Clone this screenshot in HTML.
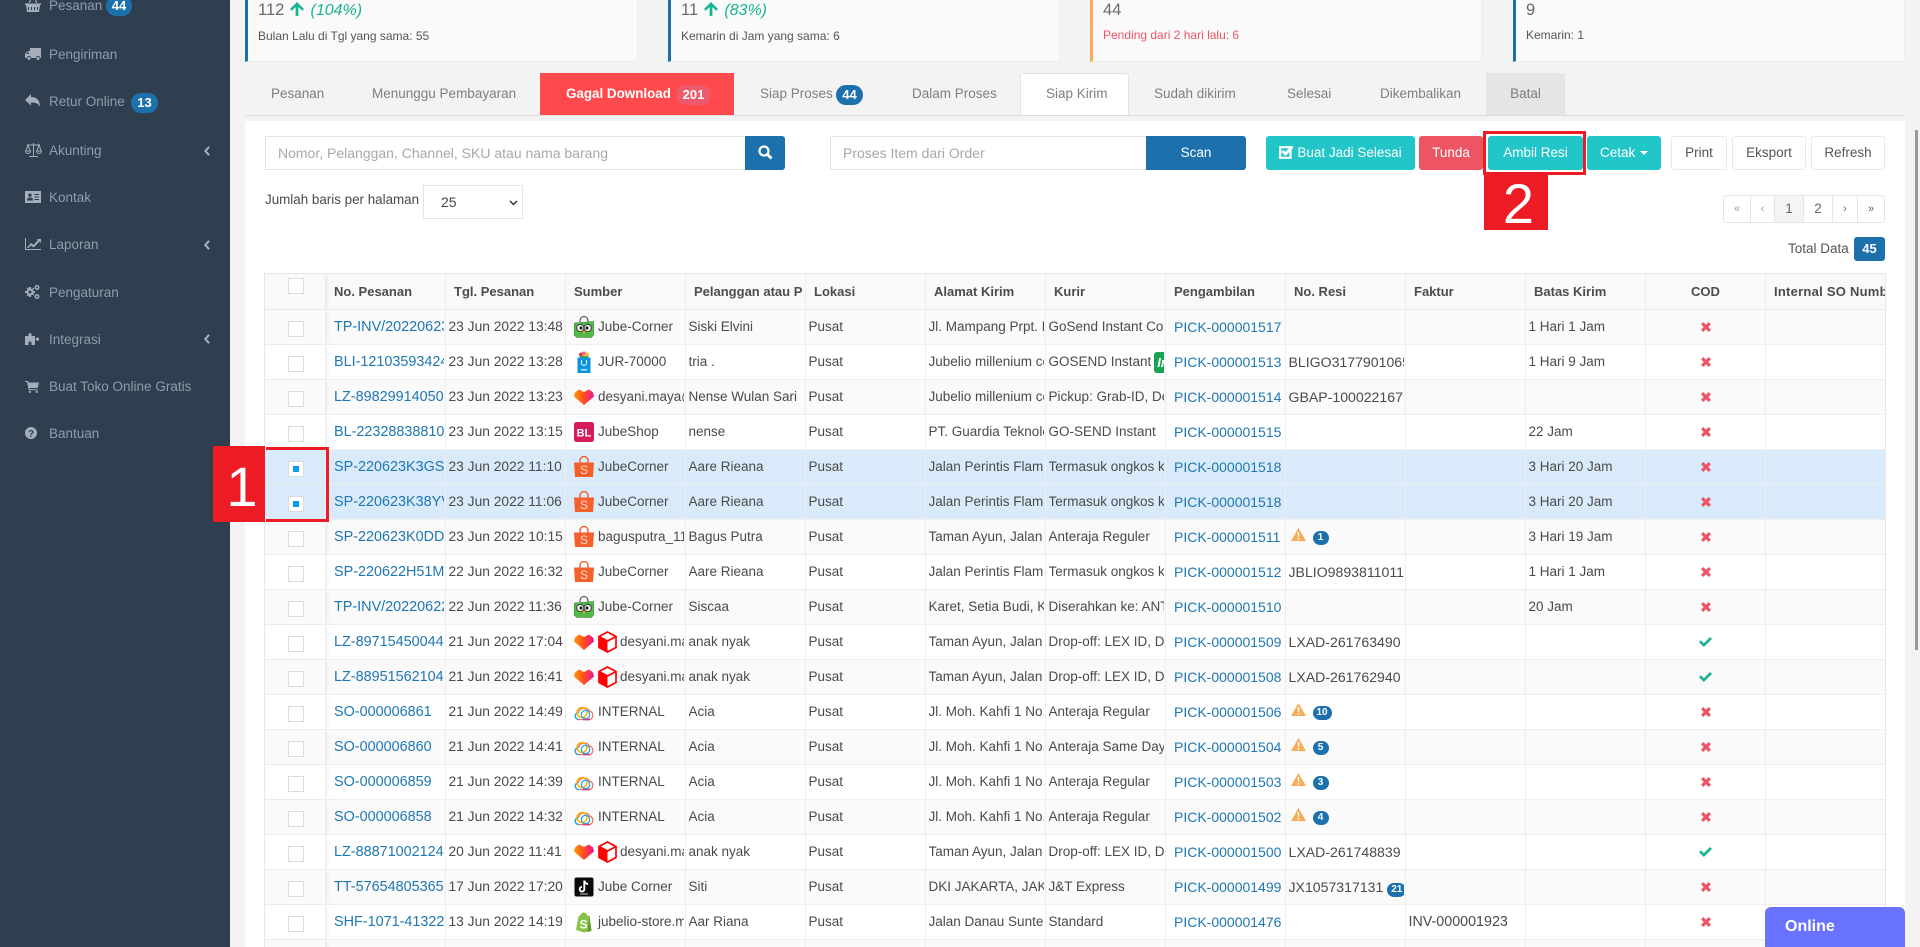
<!DOCTYPE html>
<html lang="id"><head><meta charset="utf-8"><title>Siap Kirim</title>
<style>
*{box-sizing:border-box}
html,body{margin:0;padding:0;width:1920px;height:947px;overflow:hidden;background:#f3f3f4;font-family:"Liberation Sans",sans-serif;color:#4a4a4a}
.a{position:absolute}
#side{left:0;top:0;width:230px;height:947px;background:#2f3f50;color:#8f9cab;font-size:13.5px}
#side .t{position:absolute;left:49px;line-height:20px;white-space:nowrap}
#side svg{position:absolute;left:25px;fill:#a4aebb}
#side .ch{position:absolute;left:204px;width:6px;height:10px;fill:none}
.sb{position:absolute;height:20px;border-radius:10px;background:#1c71ad;color:#fff;font-weight:bold;font-size:13px;line-height:20px;text-align:center}
.card{position:absolute;top:-20px;height:82px;background:#fafafa;border:1px solid #eeeeee;border-left:3px solid #1c71ad;border-top:0}
.card .n{position:absolute;top:19px;left:10px;font-size:16.5px;line-height:22px;color:#676a6c;white-space:nowrap}
.card .n i{color:#1ab394;margin-left:1px;font-size:16px}
.card .n svg{vertical-align:-1px;margin:0 1px}
.card .s{position:absolute;top:48px;left:10px;font-size:12px;line-height:16px;color:#555;white-space:nowrap}
.tab{position:absolute;top:73px;height:42px;line-height:42px;font-size:13.5px;color:#7b7f83;white-space:nowrap}
.input{position:absolute;top:136px;height:34px;background:#fff;border:1px solid #e3e4e5;font-size:14px;line-height:32px;color:#a8a8a8;padding-left:12px;white-space:nowrap;overflow:hidden}
.btn{position:absolute;top:136px;height:34px;line-height:34px;text-align:center;font-size:13.5px;color:#fff;border-radius:3px;white-space:nowrap}
.t1{background:#23c6c8}
.w1{background:#fff;border:1px solid #e7eaec;color:#555;line-height:32px}
.pg{position:absolute;top:195px;height:28px;line-height:26px;text-align:center;background:#fff;border:1px solid #e3e5e7;font-size:13.5px;color:#666;border-left-width:0}
.lab{position:absolute;background:#ed1c24;color:#fff;font-size:56px;text-align:center;text-indent:5px}
#tw{left:264px;top:273px;width:1622px;height:674px;overflow:hidden;border-left:1px solid #e7e7e7;border-top:1px solid #e7e7e7;border-right:1px solid #e7e7e7;background:#fff}
table{border-collapse:separate;border-spacing:0;table-layout:fixed;width:1621px;font-size:13.5px}
th,td{padding:0;border-right:1px solid #eeeeee;border-bottom:1px solid #eeeeee;position:relative}
th{background:#f9f9f9;font-size:13px;font-weight:bold;color:#4c4c4c;text-align:left;border-bottom-color:#e9e9e9}
th div{height:35px;line-height:36px;margin:0 0 0 8px;overflow:hidden;white-space:nowrap}
td>div{height:34px;line-height:34px;margin:0 1px 0 2.5px;overflow:hidden;white-space:nowrap}
td:nth-child(3){font-size:13.8px}
td:nth-child(10){font-size:14.1px}
td:nth-child(11){font-size:14.3px}
tr:nth-child(odd) td{background:#fafafa}
tr:nth-child(even) td{background:#fff}
tr.sel td{background:#d9ebfa}
th:first-child,td:first-child{box-shadow:3px 0 4px -2px rgba(0,0,0,.08);z-index:2}
td:last-child,th:last-child{border-right:0}
th:last-child{letter-spacing:.25px}
.cb{position:absolute;left:23px;top:11px;width:16px;height:16px;border:1.5px solid #dcdcdc;background:#fff;margin:0}
th .cb{top:4px}
.on:after{content:"";position:absolute;left:3.5px;top:3.5px;width:6px;height:6px;background:#0f9cf0}
a{color:#1f77b3;text-decoration:none}
td>div.l{margin-left:8px;font-size:14.4px}
td>div.p{margin-left:8px;font-size:14px}
td>div.s{display:flex;align-items:center;margin-left:8px}
.s svg{flex:none;margin-right:4px;width:20px;height:22px}
.s svg.h2{margin-right:3px;width:19px}
td>div.c{text-align:center;margin:0;display:flex;align-items:center;justify-content:center}
.w{display:flex;align-items:center}
.w svg{flex:none;margin:0 7px 0 2px;position:relative;top:-3px}
.bd{display:inline-block;height:14px;min-width:16px;padding:0 4px;border-radius:7px;background:#1c71ad;color:#fff;font-size:10px;font-weight:bold;line-height:14px;text-align:center;position:relative;top:1px}
.in{display:inline-block;background:#1aa251;color:#fff;font-style:italic;font-weight:bold;height:21px;line-height:21px;width:20px;border-radius:3px;padding-left:3px;margin-left:3px;font-size:13px;vertical-align:middle}
</style></head><body>
<svg width="0" height="0" style="position:absolute">
<defs>
<linearGradient id="lg" x1="0" y1="0" x2="1" y2="0"><stop offset="0" stop-color="#ff9a00"/><stop offset=".5" stop-color="#ff4d1f"/><stop offset="1" stop-color="#f00f96"/></linearGradient>
<symbol id="x" viewBox="0 0 10 10"><path d="M2.300 0 5 2.700 7.700 0 10 2.300 7.300 5 10 7.700 7.700 10 5 7.300 2.300 10 0 7.700 2.700 5 0 2.300z" fill="#ed5565"/></symbol>
<symbol id="v" viewBox="0 0 13 10"><path d="M0 5.200 1.900 3.300 4.800 6.200 11 0 13 2 4.800 10z" fill="#1ab394"/></symbol>
<symbol id="tp" viewBox="0 0 20 22"><path d="M6 6V4.500a4 4 0 0 1 8 0V6" fill="none" stroke="#3a3a3a" stroke-width="1"/><path d="M0 7 20 5.500V18l-2.500 3.500H3L0 19z" fill="#54b948" stroke="#357a38" stroke-width=".6"/><circle cx="6.300" cy="12" r="3.600" fill="#fff" stroke="#333"/><circle cx="13.700" cy="12" r="3.600" fill="#fff" stroke="#333"/><circle cx="7" cy="12" r="1.600" fill="#222"/><circle cx="13" cy="12" r="1.600" fill="#222"/><path d="M8.500 15h3L10 17.500z" fill="#f9a825"/></symbol>
<symbol id="bb" viewBox="0 0 20 22"><circle cx="7" cy="3.500" r="2" fill="#e53935"/><circle cx="10" cy="2.500" r="2" fill="#f06292"/><circle cx="13" cy="3.500" r="2" fill="#fbc02d"/><path d="M5 5l2 2h6l2-2z" fill="#43a047"/><path d="M3.500 6.500h13V22h-13z" fill="#0a95da"/><path d="M7.500 9v3a2.500 2.500 0 0 0 5 0V9" fill="none" stroke="#fff" stroke-width="1"/><path d="M7 18h6v1.500H7z" fill="#bfe6fa"/></symbol>
<symbol id="lz" viewBox="0 0 20 22"><path d="M1 6.500 5 3.500 10 6 15 3.500 19 6.500 20 10.500 10 19 0 10.500z" fill="url(#lg)"/></symbol>
<symbol id="bl" viewBox="0 0 20 22"><rect y="1" width="20" height="20" rx="2.500" fill="#d81b5c"/><text x="10" y="15.500" text-anchor="middle" font-family="Liberation Sans" font-weight="bold" font-size="11" fill="#fff">BL</text></symbol>
<symbol id="sp" viewBox="0 0 20 22"><path d="M6 7V4.500a4 4 0 0 1 8 0V7" fill="none" stroke="#f4511e" stroke-width="1.300"/><path d="M0 6.500h20l-1 14.500H1z" fill="#f4602c"/><text x="10" y="18" text-anchor="middle" font-family="Liberation Sans" font-size="12" fill="#ffd9c9">S</text></symbol>
<symbol id="lx" viewBox="0 0 19 22"><path d="M1 5.500 9.500 1 18 5.500 9.500 10z" fill="#fff"/><path d="M9.500 10 18 5.500v11L9.500 21z" fill="#fff"/><path d="M1 5.500 9.500 10v11L1 16.500z" fill="#f00"/><path d="M9.500 1 18 5.500v11L9.500 21 1 16.500v-11zM1 5.500 9.500 10 18 5.500" fill="none" stroke="#f00" stroke-width="1.700"/></symbol>
<symbol id="cl" viewBox="0 0 20 22"><path d="M5 18.500a3.500 3.500 0 0 1-.5-7 6 6 0 0 1 11-1.500 4.500 4.500 0 0 1 .5 8.500z" fill="#fff" stroke="#f0736a" stroke-width="1.300"/><path d="M5 18.500a3.500 3.500 0 0 1-.5-7" fill="none" stroke="#2da6e0" stroke-width="1.500"/><circle cx="8" cy="11.500" r="5" fill="none" stroke="#f4b400" stroke-width="1.400"/><path d="M9 18.500h7" stroke="#e0357f" stroke-width="1.700"/><circle cx="11.500" cy="13.500" r="4.200" fill="none" stroke="#2da6e0" stroke-width="1.300"/></symbol>
<symbol id="tt" viewBox="0 0 20 22"><rect x=".5" y="1.500" width="19" height="19" rx="2" fill="#0a0a0a"/><path d="M10.300 4.500v8.700a2.300 2.300 0 1 1-2.300-2.300M10.300 4.500c.4 2.300 1.700 3.300 3.800 3.500" fill="none" stroke="#fff" stroke-width="1.900"/><path d="M6 18h8" stroke="#ccc" stroke-width="1"/></symbol>
<symbol id="sf" viewBox="0 0 20 22"><path d="M2 19 4.500 5.500C6 5 7 1.500 10 1.500c2.500 0 3 2.500 3.500 3l2 .5 2 15-7.500 1.500z" fill="#8bc34a"/><path d="M15.500 5l2 15-4 1z" fill="#5f9a34"/><text x="9.500" y="17.500" text-anchor="middle" font-family="Liberation Sans" font-weight="bold" font-size="12" fill="#fff">S</text></symbol>
<symbol id="wn" viewBox="0 0 15 13"><path d="M7.500 0 15 13H0z" fill="#f8ac59"/><path d="M6.700 4h1.600l-.2 5H6.900zM6.700 10h1.600v1.600H6.700z" fill="#fff"/></symbol>
</defs></svg>

<div id="side" class="a">
<svg width="16" height="14" viewBox="0 0 16 14" style="top:-2px"><path d="M0 5.500h16v1.500H15l-1 7H2L1 7H0zM3 9v3h1V9zm3 0v3h1V9zm3 0v3h1V9zm3 0v3h1V9zM3.500 5 6 0h1L4.800 5zM12.500 5 10 0H9l2.200 5z"/></svg>
<div class="t" style="top:-4px">Pesanan</div><div class="sb" style="left:106px;top:-4px;width:26px">44</div>
<svg width="16" height="13" viewBox="0 0 16 13" style="top:48px"><path d="M5 0h11v10h-1a2 2 0 0 0-4 0H6a2 2 0 0 0-4 0H0V6l3-3h2zM1.500 6H4V4.200H3zM4 9a1.500 1.500 0 1 1 0 3 1.500 1.500 0 0 1 0-3zm9 0a1.500 1.500 0 1 1 0 3 1.500 1.500 0 0 1 0-3z"/></svg>
<div class="t" style="top:45px">Pengiriman</div>
<svg width="15" height="13" viewBox="0 0 15 13" style="top:94px"><path d="M6 0v3c5 0 9 2.500 9 10-1.500-3.500-4-4.500-9-4.500v3L0 6z"/></svg>
<div class="t" style="top:92px">Retur Online</div><div class="sb" style="left:131px;top:93px;width:27px">13</div>
<svg width="17" height="14" viewBox="0 0 17 14" style="top:143px;fill:none;stroke:#a4aebb;stroke-width:1"><path d="M8.500 0v13M4 13.500h9M2 2h13M3 2 .8 8h4.400zM14 2l-2.200 6h4.400zM.5 8a2.500 2.500 0 0 0 5 0M11.500 8a2.500 2.500 0 0 0 5 0"/></svg>
<div class="t" style="top:141px">Akunting</div>
<svg class="ch" viewBox="0 0 7 12" style="top:146px;left:204px;stroke:#a7b1c2;stroke-width:2.400"><path d="M6 1 1.500 6 6 11"/></svg>
<svg width="16" height="12" viewBox="0 0 16 12" style="top:191px"><path d="M0 0h16v12H0zM5 2.500a1.700 1.700 0 1 0 0 3.400 1.700 1.700 0 0 0 0-3.400zM2 9.500h6c0-2-1-3-3-3s-3 1-3 3zM9.500 3v1H14V3zM9.500 5.500v1H14v-1zM9.500 8v1H14V8z" fill-rule="evenodd"/></svg>
<div class="t" style="top:188px">Kontak</div>
<svg width="16" height="12" viewBox="0 0 16 12" style="top:238px"><path d="M0 0h1v11h15v1H0zM2.500 9 6 5l2.500 2L13 2l-1.500-1H16v4l-1.500-1.500L8.700 9.500 6 7.500 3.500 10H2.500z"/></svg>
<div class="t" style="top:235px">Laporan</div>
<svg class="ch" viewBox="0 0 7 12" style="top:240px;left:204px;stroke:#a7b1c2;stroke-width:2.400"><path d="M6 1 1.500 6 6 11"/></svg>
<svg width="15" height="14" viewBox="0 0 15 14" style="top:285px"><path d="M5 3.500a3.500 3.500 0 1 1 0 7 3.500 3.500 0 0 1 0-7zm0 2a1.500 1.500 0 1 0 0 3 1.500 1.500 0 0 0 0-3z" fill-rule="evenodd"/><path d="M4 2h2v2H4zM4 10h2v2H4zM0 6h2v2H0zM8 6h2v2H8zM1.500 3l1.500-.5 1 1.500-1 1zM7 9l1-1 1.300 1.500-1 1zM8.300 2.500 9.300 3.500 7.800 5 7 4zM3 9l1 1-1.500 1.500-1-1z"/><path d="M12 0a2.500 2.500 0 1 1 0 5 2.500 2.500 0 0 1 0-5zm0 1.500a1 1 0 1 0 0 2 1 1 0 0 0 0-2zM12 9a2.500 2.500 0 1 1 0 5 2.500 2.500 0 0 1 0-5zm0 1.500a1 1 0 1 0 0 2 1 1 0 0 0 0-2z" fill-rule="evenodd"/></svg>
<div class="t" style="top:283px">Pengaturan</div>
<svg width="14" height="13" viewBox="0 0 14 13" style="top:332px"><path d="M0 4h3.500V2.500a1.500 1.500 0 0 1 3 0V4H10v3h1a1.500 1.500 0 0 1 3 0 1.500 1.500 0 0 1-3 .5h-1V13H6.500v-2a1.500 1.500 0 0 0-3 0v2H0z"/></svg>
<div class="t" style="top:330px">Integrasi</div>
<svg class="ch" viewBox="0 0 7 12" style="top:334px;left:204px;stroke:#a7b1c2;stroke-width:2.400"><path d="M6 1 1.500 6 6 11"/></svg>
<svg width="14" height="12" viewBox="0 0 14 12" style="top:381px"><path d="M0 0h3l.5 1.500H14L12.700 7H4.500l.3 1.300H12.500v1H3.800L2 1H0zM4.800 9.800a1.100 1.100 0 1 1 0 2.200 1.100 1.100 0 0 1 0-2.200zm7 0a1.100 1.100 0 1 1 0 2.200 1.100 1.100 0 0 1 0-2.200z"/></svg>
<div class="t" style="top:377px">Buat Toko Online Gratis</div>
<svg width="12" height="12" viewBox="0 0 12 12" style="top:427px"><circle cx="6" cy="6" r="6"/><text x="6" y="10" text-anchor="middle" font-family="Liberation Sans" font-weight="bold" font-size="10" fill="#2f3f50">?</text></svg>
<div class="t" style="top:424px">Bantuan</div>
</div>

<div class="card" style="left:245px;width:393px"><div class="n">112 <svg width="14" height="14" viewBox="0 0 14 14"><path d="M7 0l7 7-1.800 1.800L8.400 5v9H5.600V5L1.800 8.800 0 7z" fill="#1ab394"/></svg> <i>(104%)</i></div><div class="s">Bulan Lalu di Tgl yang sama: 55</div></div>
<div class="card" style="left:668px;width:392px"><div class="n">11 <svg width="14" height="14" viewBox="0 0 14 14"><path d="M7 0l7 7-1.800 1.800L8.400 5v9H5.600V5L1.800 8.800 0 7z" fill="#1ab394"/></svg> <i>(83%)</i></div><div class="s">Kemarin di Jam yang sama: 6</div></div>
<div class="card" style="left:1090px;width:392px;border-left-color:#f8ac59"><div class="n">44</div><div class="s" style="color:#ed5565;top:47px">Pending dari 2 hari lalu: 6</div></div>
<div class="card" style="left:1513px;width:392px"><div class="n">9</div><div class="s" style="top:47px">Kemarin: 1</div></div>

<div class="a" style="left:245px;top:115px;width:1660px;height:1px;background:#dcdcdc"></div>
<div class="tab" style="left:271px">Pesanan</div>
<div class="tab" style="left:372px">Menunggu Pembayaran</div>
<div class="tab" style="left:540px;width:194px;background:#ff4a4d;color:#fff;font-weight:bold;padding-left:26px;font-size:13.4px">Gagal Download<span class="sb" style="left:136px;top:12px;width:35px;background:#ed5a6c;font-size:13px">201</span></div>
<div class="tab" style="left:760px">Siap Proses</div><div class="sb" style="left:836px;top:85px;width:27px">44</div>
<div class="tab" style="left:912px">Dalam Proses</div>
<div class="tab" style="left:1020px;width:109px;background:#fff;border:1px solid #e3e3e3;border-bottom:0;border-radius:3px 3px 0 0;padding-left:25px;height:42px;line-height:40px">Siap Kirim</div>
<div class="tab" style="left:1154px">Sudah dikirim</div>
<div class="tab" style="left:1287px">Selesai</div>
<div class="tab" style="left:1380px">Dikembalikan</div>
<div class="tab" style="left:1486px;width:79px;background:#e5e5e5;text-align:center">Batal</div>

<div class="a" style="left:245px;top:121px;width:1660px;height:826px;background:#fff"></div>

<div class="input" style="left:265px;width:481px">Nomor, Pelanggan, Channel, SKU atau nama barang</div>
<div class="btn" style="left:745px;width:40px;background:#1c71ad;border-radius:0 3px 3px 0"><svg width="15" height="15" viewBox="0 0 15 15" style="vertical-align:-3px"><circle cx="6" cy="6" r="4.500" fill="none" stroke="#fff" stroke-width="2.200"/><path d="M9.500 9.500 13.500 13.500" stroke="#fff" stroke-width="2.800"/></svg></div>
<div class="input" style="left:830px;width:317px">Proses Item dari Order</div>
<div class="btn" style="left:1146px;width:100px;background:#1c71ad;border-radius:0 3px 3px 0">Scan</div>
<div class="btn t1" style="left:1266px;width:149px"><svg width="15" height="14" viewBox="0 0 15 14" style="vertical-align:-2px;margin-right:3px"><path d="M1.200 2.200h10.300v10.600H1.200z" fill="none" stroke="#fff" stroke-width="2.200"/><path d="M3.500 6 6.500 9 13.500 1.500" fill="none" stroke="#fff" stroke-width="2.800"/></svg>Buat Jadi Selesai</div>
<div class="btn" style="left:1419px;width:64px;background:#ed5565">Tunda</div>
<div class="a" style="left:1483px;top:131px;width:103px;height:44px;border:3px solid #ed1c24;background:#fff"></div>
<div class="btn t1" style="left:1488px;width:95px">Ambil Resi</div>
<div class="btn t1" style="left:1587px;width:74px">Cetak <span style="display:inline-block;border:4px solid transparent;border-top-color:#fff;border-bottom:0;vertical-align:2px;margin-left:1px"></span></div>
<div class="btn w1" style="left:1671px;width:56px">Print</div>
<div class="btn w1" style="left:1732px;width:74px">Eksport</div>
<div class="btn w1" style="left:1811px;width:74px">Refresh</div>
<div class="lab" style="left:1484px;top:175px;width:64px;height:55px;line-height:58px;overflow:hidden">2</div>

<div class="a" style="left:265px;top:191px;font-size:13.400px;line-height:18px;white-space:nowrap;color:#4a4a4a">Jumlah baris per halaman</div>
<div class="a" style="left:423px;top:185px;width:100px;height:34px;border:1px solid #e3e4e5;background:#fff;font-size:14px;line-height:33px;padding-left:17px">25<svg width="9" height="6" viewBox="0 0 9 6" style="position:absolute;left:85px;top:14px"><path d="M1 1 4.500 4.500 8 1" fill="none" stroke="#333" stroke-width="1.500"/></svg></div>

<div class="pg" style="left:1723px;width:28px;border-left-width:1px;border-radius:3px 0 0 3px;color:#999;font-size:11px">«</div>
<div class="pg" style="left:1751px;width:24px;color:#999;font-size:11px">‹</div>
<div class="pg" style="left:1775px;width:29px;background:#f4f4f4">1</div>
<div class="pg" style="left:1804px;width:29px">2</div>
<div class="pg" style="left:1833px;width:25px;font-size:11px">›</div>
<div class="pg" style="left:1858px;width:27px;border-radius:0 3px 3px 0;font-size:11px">»</div>
<div class="a" style="left:1788px;top:240px;font-size:13.500px;line-height:18px;color:#555;white-space:nowrap">Total Data</div>
<div class="a" style="left:1854px;top:237px;width:31px;height:24px;background:#1c71ad;color:#fff;border-radius:3px;font-size:13px;font-weight:bold;line-height:24px;text-align:center">45</div>

<div id="tw" class="a"><table>
<colgroup><col style="width:61px"><col span="13" style="width:120px"></colgroup>
<thead><tr><th><span class="cb"></span><div style="height:35px"></div></th><th><div>No. Pesanan</div></th><th><div>Tgl. Pesanan</div></th><th><div>Sumber</div></th><th><div>Pelanggan atau P</div></th><th><div>Lokasi</div></th><th><div>Alamat Kirim</div></th><th><div>Kurir</div></th><th><div>Pengambilan</div></th><th><div>No. Resi</div></th><th><div>Faktur</div></th><th><div>Batas Kirim</div></th><th><div style="text-align:center;margin:0">COD</div></th><th><div>Internal SO Number</div></th></tr></thead>
<tbody>
<tr><td><span class="cb"></span><div></div></td><td><div class="l"><a>TP-INV/20220623001</a></div></td><td><div>23 Jun 2022 13:48</div></td><td><div class="s"><svg><use href="#tp"/></svg>Jube-Corner</div></td><td><div>Siski Elvini</div></td><td><div>Pusat</div></td><td><div>Jl. Mampang Prpt. Raya</div></td><td><div>GoSend Instant Courier</div></td><td><div class="p"><a>PICK-000001517</a></div></td><td><div></div></td><td><div></div></td><td><div>1 Hari 1 Jam</div></td><td><div class="c"><svg width="10" height="10"><use href="#x"/></svg></div></td><td><div></div></td></tr>
<tr><td><span class="cb"></span><div></div></td><td><div class="l"><a>BLI-12103593424</a></div></td><td><div>23 Jun 2022 13:28</div></td><td><div class="s"><svg><use href="#bb"/></svg>JUR-70000</div></td><td><div>tria .</div></td><td><div>Pusat</div></td><td><div>Jubelio millenium center</div></td><td><div>GOSEND Instant<span class="in">In</span></div></td><td><div class="p"><a>PICK-000001513</a></div></td><td><div>BLIGO3177901065</div></td><td><div></div></td><td><div>1 Hari 9 Jam</div></td><td><div class="c"><svg width="10" height="10"><use href="#x"/></svg></div></td><td><div></div></td></tr>
<tr><td><span class="cb"></span><div></div></td><td><div class="l"><a>LZ-89829914050</a></div></td><td><div>23 Jun 2022 13:23</div></td><td><div class="s"><svg><use href="#lz"/></svg>desyani.maya@gmail</div></td><td><div>Nense Wulan Sari</div></td><td><div>Pusat</div></td><td><div>Jubelio millenium center</div></td><td><div>Pickup: Grab-ID, Delivery</div></td><td><div class="p"><a>PICK-000001514</a></div></td><td><div>GBAP-100022167</div></td><td><div></div></td><td><div></div></td><td><div class="c"><svg width="10" height="10"><use href="#x"/></svg></div></td><td><div></div></td></tr>
<tr><td><span class="cb"></span><div></div></td><td><div class="l"><a>BL-22328838810</a></div></td><td><div>23 Jun 2022 13:15</div></td><td><div class="s"><svg><use href="#bl"/></svg>JubeShop</div></td><td><div>nense</div></td><td><div>Pusat</div></td><td><div>PT. Guardia Teknologi</div></td><td><div>GO-SEND Instant</div></td><td><div class="p"><a>PICK-000001515</a></div></td><td><div></div></td><td><div></div></td><td><div>22 Jam</div></td><td><div class="c"><svg width="10" height="10"><use href="#x"/></svg></div></td><td><div></div></td></tr>
<tr class="sel"><td><span class="cb on"></span><div></div></td><td><div class="l"><a>SP-220623K3GSR</a></div></td><td><div>23 Jun 2022 11:10</div></td><td><div class="s"><svg><use href="#sp"/></svg>JubeCorner</div></td><td><div>Aare Rieana</div></td><td><div>Pusat</div></td><td><div>Jalan Perintis Flamboyan</div></td><td><div>Termasuk ongkos kirim</div></td><td><div class="p"><a>PICK-000001518</a></div></td><td><div></div></td><td><div></div></td><td><div>3 Hari 20 Jam</div></td><td><div class="c"><svg width="10" height="10"><use href="#x"/></svg></div></td><td><div></div></td></tr>
<tr class="sel"><td><span class="cb on"></span><div></div></td><td><div class="l"><a>SP-220623K38YV</a></div></td><td><div>23 Jun 2022 11:06</div></td><td><div class="s"><svg><use href="#sp"/></svg>JubeCorner</div></td><td><div>Aare Rieana</div></td><td><div>Pusat</div></td><td><div>Jalan Perintis Flamboyan</div></td><td><div>Termasuk ongkos kirim</div></td><td><div class="p"><a>PICK-000001518</a></div></td><td><div></div></td><td><div></div></td><td><div>3 Hari 20 Jam</div></td><td><div class="c"><svg width="10" height="10"><use href="#x"/></svg></div></td><td><div></div></td></tr>
<tr><td><span class="cb"></span><div></div></td><td><div class="l"><a>SP-220623K0DD8</a></div></td><td><div>23 Jun 2022 10:15</div></td><td><div class="s"><svg><use href="#sp"/></svg>bagusputra_11</div></td><td><div>Bagus Putra</div></td><td><div>Pusat</div></td><td><div>Taman Ayun, Jalan Raya</div></td><td><div>Anteraja Reguler</div></td><td><div class="p"><a>PICK-000001511</a></div></td><td><div class="w"><svg width="15" height="13"><use href="#wn"/></svg><span class="bd">1</span></div></td><td><div></div></td><td><div>3 Hari 19 Jam</div></td><td><div class="c"><svg width="10" height="10"><use href="#x"/></svg></div></td><td><div></div></td></tr>
<tr><td><span class="cb"></span><div></div></td><td><div class="l"><a>SP-220622H51M7</a></div></td><td><div>22 Jun 2022 16:32</div></td><td><div class="s"><svg><use href="#sp"/></svg>JubeCorner</div></td><td><div>Aare Rieana</div></td><td><div>Pusat</div></td><td><div>Jalan Perintis Flamboyan</div></td><td><div>Termasuk ongkos kirim</div></td><td><div class="p"><a>PICK-000001512</a></div></td><td><div>JBLIO9893811011</div></td><td><div></div></td><td><div>1 Hari 1 Jam</div></td><td><div class="c"><svg width="10" height="10"><use href="#x"/></svg></div></td><td><div></div></td></tr>
<tr><td><span class="cb"></span><div></div></td><td><div class="l"><a>TP-INV/20220622001</a></div></td><td><div>22 Jun 2022 11:36</div></td><td><div class="s"><svg><use href="#tp"/></svg>Jube-Corner</div></td><td><div>Siscaa</div></td><td><div>Pusat</div></td><td><div>Karet, Setia Budi, Kuningan</div></td><td><div>Diserahkan ke: ANTERAJA</div></td><td><div class="p"><a>PICK-000001510</a></div></td><td><div></div></td><td><div></div></td><td><div>20 Jam</div></td><td><div class="c"><svg width="10" height="10"><use href="#x"/></svg></div></td><td><div></div></td></tr>
<tr><td><span class="cb"></span><div></div></td><td><div class="l"><a>LZ-89715450044</a></div></td><td><div>21 Jun 2022 17:04</div></td><td><div class="s"><svg><use href="#lz"/></svg><svg class="h2"><use href="#lx"/></svg>desyani.maya</div></td><td><div>anak nyak</div></td><td><div>Pusat</div></td><td><div>Taman Ayun, Jalan</div></td><td><div>Drop-off: LEX ID, DOP</div></td><td><div class="p"><a>PICK-000001509</a></div></td><td><div>LXAD-261763490</div></td><td><div></div></td><td><div></div></td><td><div class="c"><svg width="13" height="10"><use href="#v"/></svg></div></td><td><div></div></td></tr>
<tr><td><span class="cb"></span><div></div></td><td><div class="l"><a>LZ-88951562104</a></div></td><td><div>21 Jun 2022 16:41</div></td><td><div class="s"><svg><use href="#lz"/></svg><svg class="h2"><use href="#lx"/></svg>desyani.maya</div></td><td><div>anak nyak</div></td><td><div>Pusat</div></td><td><div>Taman Ayun, Jalan</div></td><td><div>Drop-off: LEX ID, DOP</div></td><td><div class="p"><a>PICK-000001508</a></div></td><td><div>LXAD-261762940</div></td><td><div></div></td><td><div></div></td><td><div class="c"><svg width="13" height="10"><use href="#v"/></svg></div></td><td><div></div></td></tr>
<tr><td><span class="cb"></span><div></div></td><td><div class="l"><a>SO-000006861</a></div></td><td><div>21 Jun 2022 14:49</div></td><td><div class="s"><svg><use href="#cl"/></svg>INTERNAL</div></td><td><div>Acia</div></td><td><div>Pusat</div></td><td><div>Jl. Moh. Kahfi 1 No. 5</div></td><td><div>Anteraja Regular</div></td><td><div class="p"><a>PICK-000001506</a></div></td><td><div class="w"><svg width="15" height="13"><use href="#wn"/></svg><span class="bd">10</span></div></td><td><div></div></td><td><div></div></td><td><div class="c"><svg width="10" height="10"><use href="#x"/></svg></div></td><td><div></div></td></tr>
<tr><td><span class="cb"></span><div></div></td><td><div class="l"><a>SO-000006860</a></div></td><td><div>21 Jun 2022 14:41</div></td><td><div class="s"><svg><use href="#cl"/></svg>INTERNAL</div></td><td><div>Acia</div></td><td><div>Pusat</div></td><td><div>Jl. Moh. Kahfi 1 No. 5</div></td><td><div>Anteraja Same Day</div></td><td><div class="p"><a>PICK-000001504</a></div></td><td><div class="w"><svg width="15" height="13"><use href="#wn"/></svg><span class="bd">5</span></div></td><td><div></div></td><td><div></div></td><td><div class="c"><svg width="10" height="10"><use href="#x"/></svg></div></td><td><div></div></td></tr>
<tr><td><span class="cb"></span><div></div></td><td><div class="l"><a>SO-000006859</a></div></td><td><div>21 Jun 2022 14:39</div></td><td><div class="s"><svg><use href="#cl"/></svg>INTERNAL</div></td><td><div>Acia</div></td><td><div>Pusat</div></td><td><div>Jl. Moh. Kahfi 1 No. 5</div></td><td><div>Anteraja Regular</div></td><td><div class="p"><a>PICK-000001503</a></div></td><td><div class="w"><svg width="15" height="13"><use href="#wn"/></svg><span class="bd">3</span></div></td><td><div></div></td><td><div></div></td><td><div class="c"><svg width="10" height="10"><use href="#x"/></svg></div></td><td><div></div></td></tr>
<tr><td><span class="cb"></span><div></div></td><td><div class="l"><a>SO-000006858</a></div></td><td><div>21 Jun 2022 14:32</div></td><td><div class="s"><svg><use href="#cl"/></svg>INTERNAL</div></td><td><div>Acia</div></td><td><div>Pusat</div></td><td><div>Jl. Moh. Kahfi 1 No. 5</div></td><td><div>Anteraja Regular</div></td><td><div class="p"><a>PICK-000001502</a></div></td><td><div class="w"><svg width="15" height="13"><use href="#wn"/></svg><span class="bd">4</span></div></td><td><div></div></td><td><div></div></td><td><div class="c"><svg width="10" height="10"><use href="#x"/></svg></div></td><td><div></div></td></tr>
<tr><td><span class="cb"></span><div></div></td><td><div class="l"><a>LZ-88871002124</a></div></td><td><div>20 Jun 2022 11:41</div></td><td><div class="s"><svg><use href="#lz"/></svg><svg class="h2"><use href="#lx"/></svg>desyani.maya</div></td><td><div>anak nyak</div></td><td><div>Pusat</div></td><td><div>Taman Ayun, Jalan</div></td><td><div>Drop-off: LEX ID, DOP</div></td><td><div class="p"><a>PICK-000001500</a></div></td><td><div>LXAD-261748839</div></td><td><div></div></td><td><div></div></td><td><div class="c"><svg width="13" height="10"><use href="#v"/></svg></div></td><td><div></div></td></tr>
<tr><td><span class="cb"></span><div></div></td><td><div class="l"><a>TT-57654805365</a></div></td><td><div>17 Jun 2022 17:20</div></td><td><div class="s"><svg><use href="#tt"/></svg>Jube Corner</div></td><td><div>Siti</div></td><td><div>Pusat</div></td><td><div>DKI JAKARTA, JAKARTA</div></td><td><div>J&amp;T Express</div></td><td><div class="p"><a>PICK-000001499</a></div></td><td><div>JX1057317131 <span class="bd" style="top:0">21</span></div></td><td><div></div></td><td><div></div></td><td><div class="c"><svg width="10" height="10"><use href="#x"/></svg></div></td><td><div></div></td></tr>
<tr><td><span class="cb"></span><div></div></td><td><div class="l"><a>SHF-1071-41322</a></div></td><td><div>13 Jun 2022 14:19</div></td><td><div class="s"><svg><use href="#sf"/></svg>jubelio-store.myshopify</div></td><td><div>Aar Riana</div></td><td><div>Pusat</div></td><td><div>Jalan Danau Sunter</div></td><td><div>Standard</div></td><td><div class="p"><a>PICK-000001476</a></div></td><td><div></div></td><td><div>INV-000001923</div></td><td><div></div></td><td><div class="c"><svg width="10" height="10"><use href="#x"/></svg></div></td><td><div></div></td></tr>
<tr><td><div></div></td><td><div></div></td><td><div></div></td><td><div></div></td><td><div></div></td><td><div></div></td><td><div></div></td><td><div></div></td><td><div></div></td><td><div></div></td><td><div></div></td><td><div></div></td><td><div></div></td><td><div></div></td></tr>
</tbody></table></div>

<div class="lab" style="left:213px;top:446px;width:53px;height:76px;line-height:82px;overflow:hidden">1</div>
<div class="a" style="left:266px;top:447px;width:63px;height:75px;border:3px solid #ed1c24;border-left:0;z-index:5"></div>

<div class="a" style="left:1765px;top:907px;width:140px;height:40px;background:#6a73ff;border-radius:6px 6px 0 0;color:#fff;font-size:16px;font-weight:bold;line-height:40px;padding-left:20px;z-index:6">Online</div>
<div class="a" style="left:1915px;top:130px;width:3px;height:520px;background:#999"></div>
</body></html>
